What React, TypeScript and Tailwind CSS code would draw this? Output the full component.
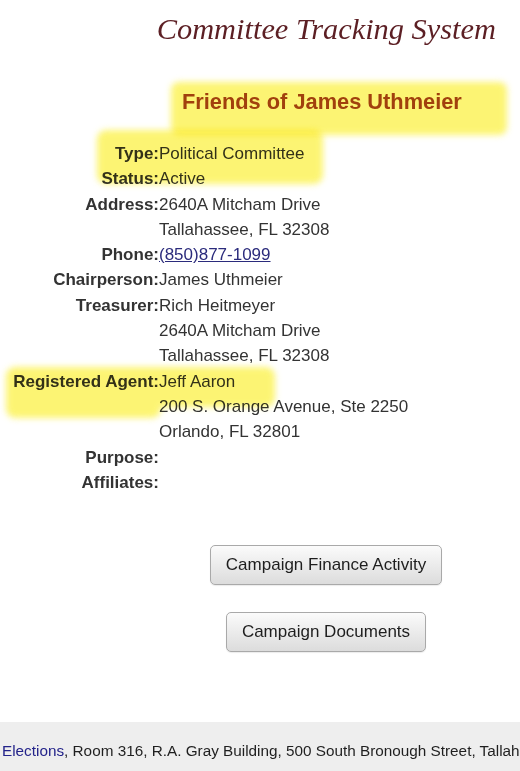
const rows: { label: string; lines: React.ReactNode[] }[] = [
  { label: 'Type:', lines: ['Political Committee'] },
  { label: 'Status:', lines: ['Active'] },
  { label: 'Address:', lines: ['2640A Mitcham Drive', 'Tallahassee, FL 32308'] },
  {
    label: 'Phone:',
    lines: [
      <a key="p" href="#" className="text-[#2b2b7c] underline">
        (850)877-1099
      </a>,
    ],
  },
  { label: 'Chairperson:', lines: ['James Uthmeier'] },
  { label: 'Treasurer:', lines: ['Rich Heitmeyer', '2640A Mitcham Drive', 'Tallahassee, FL 32308'] },
  { label: 'Registered Agent:', lines: ['Jeff Aaron', '200 S. Orange Avenue, Ste 2250', 'Orlando, FL 32801'] },
  { label: 'Purpose:', lines: [''] },
  { label: 'Affiliates:', lines: [''] },
];

function Button({ children }: { children: React.ReactNode }) {
  return (
    <button
      type="button"
      className="h-[40px] px-[15px] rounded-[5px] border border-[#a9a9a9] bg-gradient-to-b from-[#fbfbfb] to-[#dcdcdc] text-[17px] text-[#1e1e1e] shadow-[0_1px_1px_rgba(0,0,0,0.08)]"
    >
      {children}
    </button>
  );
}

export default function App() {
  return (
    <div className="relative flex flex-col w-[520px] h-[771px] overflow-hidden bg-white font-['Liberation_Sans',Arial,sans-serif] text-[#333]">
      <div className="pt-[10px] pr-[24px] text-right font-['Liberation_Serif','Times_New_Roman',serif] italic text-[30.4px] leading-[38px] text-[#5c1f24]">
        Committee Tracking System
      </div>

      <div className="mt-[42px] pl-[182px] text-[21.8px] leading-[24px] font-bold text-[#a3431c]">
        Friends of James Uthmeier
      </div>

      <div className="mt-[27px] text-[17px] leading-[25.3px]">
        {rows.map((r) => (
          <div key={r.label} className="grid grid-cols-[159px_1fr]">
            <div className="text-right font-bold text-[#333] whitespace-nowrap">{r.label}</div>
            <div className="whitespace-nowrap">
              {r.lines.map((l, i) => (
                <div key={i} className="h-[25.3px]">
                  {l}
                </div>
              ))}
            </div>
          </div>
        ))}
      </div>

      <div className="w-[652px] mt-[50px] flex flex-col items-center gap-[27px]">
        <Button>Campaign Finance Activity</Button>
        <Button>Campaign Documents</Button>
      </div>

      <div className="mt-auto h-[49px] bg-[#eeeeee] overflow-hidden">
        <div className="pl-[2px] pt-[20px] text-[15.3px] leading-[18px] text-[#1f1f1f] whitespace-nowrap">
          <a href="#" className="text-[#23238a]">Elections</a>, Room 316, R.A. Gray Building, 500 South Bronough
          Street, Tallahassee, FL 32399-0250
        </div>
      </div>

      {/* marker highlights */}
      <div className="pointer-events-none absolute left-[171px] top-[82px] w-[336px] h-[53px] rounded-[8px] bg-[#fcf35a] opacity-85 mix-blend-multiply blur-[3px]" />
      <div className="pointer-events-none absolute left-[97px] top-[130px] w-[226px] h-[54px] rounded-[9px] bg-[#fcf35a] opacity-85 mix-blend-multiply blur-[3px]" />
      <div className="pointer-events-none absolute left-[6px] top-[367px] w-[269px] h-[51px] opacity-85 mix-blend-multiply blur-[3px]">
        <div className="h-[40px] rounded-[9px] bg-[#fcf35a]" />
        <div className="-mt-[19px] w-[155px] h-[30px] rounded-[9px] bg-[#fcf35a]" />
      </div>
    </div>
  );
}
